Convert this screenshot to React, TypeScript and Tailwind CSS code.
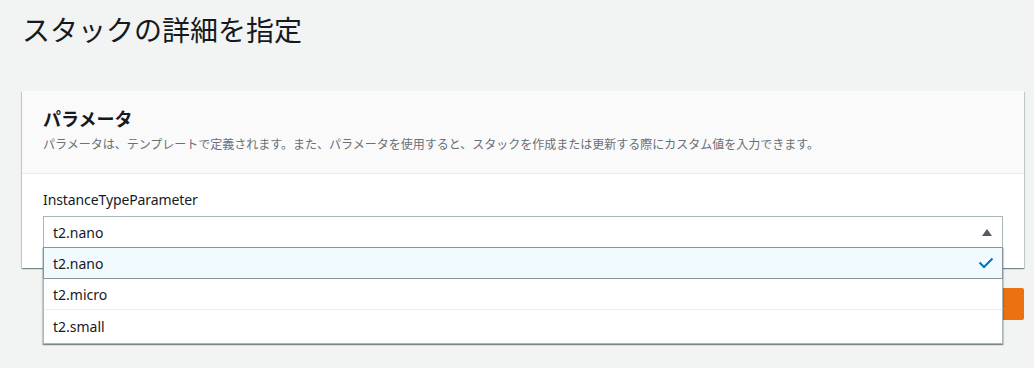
import React from "react";

const FONT = { fontFamily: '"Noto Sans", "Noto Sans CJK JP", sans-serif' };

export default function App() {
  return (
    <div
      className="w-[1034px] h-[368px] overflow-hidden bg-[#f2f3f3] pl-[22px] text-[#16191f]"
      style={FONT}
    >
      <h1 className="pt-[10px] text-[28px] leading-[40px] font-normal">
        スタックの詳細を指定
      </h1>

      <div className="mt-[41px] w-[1002px] bg-white shadow-[0_1px_1px_0_rgba(0,28,36,0.3),1px_1px_1px_0_rgba(0,28,36,0.15),-1px_1px_1px_0_rgba(0,28,36,0.15)]">
        <div className="bg-[#fafafa] border-b border-[#eaeded] px-[21px] pt-[17px] pb-[20px]">
          <h2 className="text-[18px] leading-[22px] font-bold">パラメータ</h2>
          <p className="mt-[7px] text-[12px] leading-[16px] text-[#687078]">
            パラメータは、テンプレートで定義されます。また、パラメータを使用すると、スタックを作成または更新する際にカスタム値を入力できます。
          </p>
        </div>
        <div className="px-[21px] pt-[16px] pb-[20px]">
          <div className="text-[14px] leading-[20px] tracking-[-0.1px]">InstanceTypeParameter</div>
          <div className="relative mt-[6px]">
            <div className="h-[32px] flex items-center justify-between border border-[#aab7b8] bg-white pl-[9px] pr-[10px] text-[14px]">
              <span>t2.nano</span>
              <svg width="10" height="7" viewBox="0 0 10 7" className="text-[#545b64]">
                <polygon points="0,7 5,0 10,7" fill="currentColor" />
              </svg>
            </div>
            <div className="absolute left-0 right-0 top-[31px] z-10 bg-white border-x border-b border-[#aab7b8] shadow-[0_1px_1px_0_rgba(0,28,36,0.3),1px_1px_1px_0_rgba(0,28,36,0.15),-1px_1px_1px_0_rgba(0,28,36,0.15)] text-[14px]">
              <div className="-mx-px h-[32px] flex items-center justify-between border border-[#879596] bg-[#f1faff] pl-[9px] pr-[8px]">
                <span>t2.nano</span>
                <svg width="16" height="12" viewBox="0 0 16 12" fill="none">
                  <path d="M1.5 5.5 L6 10 L14.5 1.5" stroke="#0073bb" strokeWidth="2" />
                </svg>
              </div>
              <div className="h-[31px] flex items-center border-b border-[#eaeded] pl-[9px]">
                <span>t2.micro</span>
              </div>
              <div className="h-[33px] flex items-center pl-[9px]">
                <span>t2.small</span>
              </div>
            </div>
          </div>
        </div>
      </div>

      <div className="w-[1002px] mt-[20px] flex justify-end">
        <button className="h-[32px] px-[20px] rounded-[2px] bg-[#ec7211] text-white text-[14px] font-bold">
          次へ
        </button>
      </div>
    </div>
  );
}
